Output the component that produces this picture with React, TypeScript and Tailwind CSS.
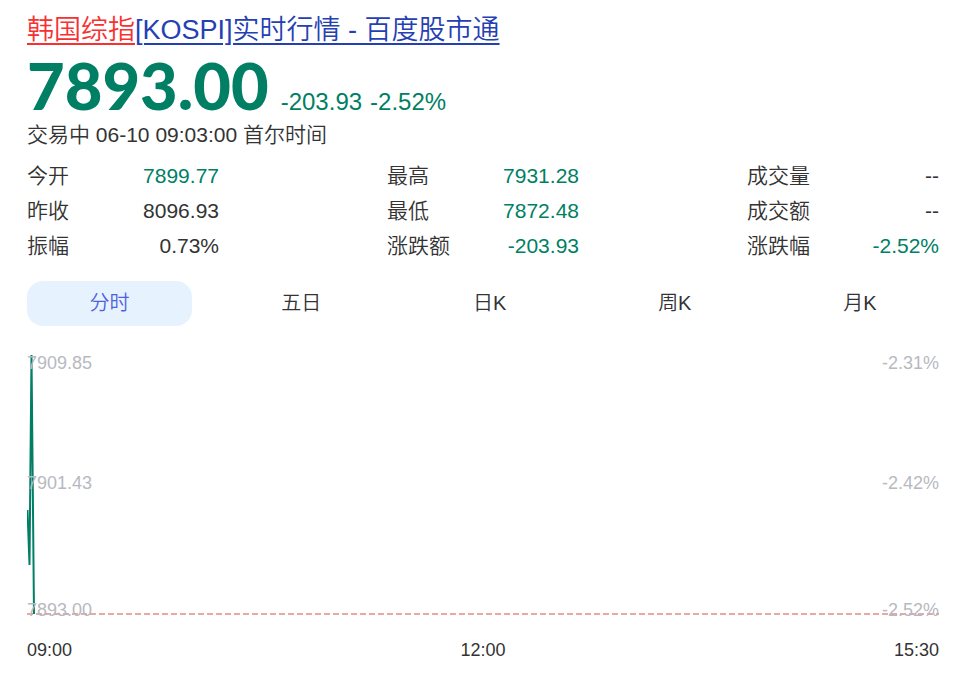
import React, { useState } from 'react';

interface Stat {
  label: string;
  value: string;
  down?: boolean;
}

// one inner array per column
const statColumns: Stat[][] = [
  [
    { label: '今开', value: '7899.77', down: true },
    { label: '昨收', value: '8096.93' },
    { label: '振幅', value: '0.73%' },
  ],
  [
    { label: '最高', value: '7931.28', down: true },
    { label: '最低', value: '7872.48', down: true },
    { label: '涨跌额', value: '-203.93', down: true },
  ],
  [
    { label: '成交量', value: '--' },
    { label: '成交额', value: '--' },
    { label: '涨跌幅', value: '-2.52%', down: true },
  ],
];

const tabs = ['分时', '五日', '日K', '周K', '月K'];

const levels = [
  { price: '7909.85', percent: '-2.31%' },
  { price: '7901.43', percent: '-2.42%' },
  { price: '7893.00', percent: '-2.52%' },
];

const times = ['09:00', '12:00', '15:30'];

const StatColumn: React.FC<{ stats: Stat[] }> = ({ stats }) => (
  <dl>
    {stats.map(stat => (
      <div key={stat.label} className="flex justify-between">
        <dt>{stat.label}</dt>
        <dd className={stat.down ? 'text-[#007f65]' : ''}>{stat.value}</dd>
      </div>
    ))}
  </dl>
);

const PriceChart: React.FC = () => (
  <div>
    <div className="relative">
      <svg className="block h-[265px] w-full" role="img" aria-label="分时">
        <line x1="0" y1="260" x2="100%" y2="260" stroke="#eba6a6" strokeWidth="2" strokeDasharray="6 3" />
        <polyline
          points="0.5,156 2.5,211 4.5,1 7,260"
          fill="none"
          stroke="#007f65"
          strokeWidth="2"
          strokeLinejoin="bevel"
        />
      </svg>
      {/* Axis values sit on top of the line */}
      <div className="absolute inset-0 grid grid-rows-[120px_127px_18px] text-[18px] leading-[18px] text-[#b7b9c1]">
        {levels.map(level => (
          <div key={level.price} className="flex justify-between">
            <span>{level.price}</span>
            <span>{level.percent}</span>
          </div>
        ))}
      </div>
    </div>
    <div className="mt-5 flex justify-between text-[18px] leading-[22px]">
      {times.map(time => (
        <span key={time}>{time}</span>
      ))}
    </div>
  </div>
);

const App: React.FC = () => {
  const [activeTab, setActiveTab] = useState(tabs[0]);

  return (
    <main className="bg-white pt-3 pr-[30px] pb-4 pl-[27px] font-['Liberation_Sans','Noto_Sans_CJK_SC',sans-serif] font-[350] text-[#333333]">
      <h1 className="text-[27px] leading-[36px] font-[350]">
        <a href="#" className="text-[#2440b3] underline decoration-2 underline-offset-4">
          <em className="text-[#f73131] not-italic underline decoration-2 underline-offset-4">韩国综指</em>
          [KOSPI]实时行情 - 百度股市通
        </a>
      </h1>

      <div className="mt-0.5 flex items-baseline text-2xl text-[#007f65]">
        <span className="font-[Lato] text-[65px] leading-[70px] font-black">7893.00</span>
        <span className="ml-3">-203.93</span>
        <span className="ml-2">-2.52%</span>
      </div>
      <p className="text-[21px] leading-[30px]">交易中 06-10 09:03:00 首尔时间</p>

      <div className="mt-2 grid grid-cols-3 gap-[168px] text-[21px] leading-[35px]">
        {statColumns.map(stats => (
          <StatColumn key={stats[0].label} stats={stats} />
        ))}
      </div>

      <div role="tablist" className="mt-[18px] flex gap-[27px] text-xl leading-[45px]">
        {tabs.map(tab => (
          <button
            key={tab}
            role="tab"
            aria-selected={tab === activeTab}
            onClick={() => setActiveTab(tab)}
            className={`flex-auto cursor-pointer rounded-2xl ${tab === activeTab ? 'bg-[#e7f2ff] text-[#4e5fe0]' : ''}`}
          >
            {tab}
          </button>
        ))}
      </div>

      <div className="mt-7">
        <PriceChart />
      </div>
    </main>
  );
};

export default App;
